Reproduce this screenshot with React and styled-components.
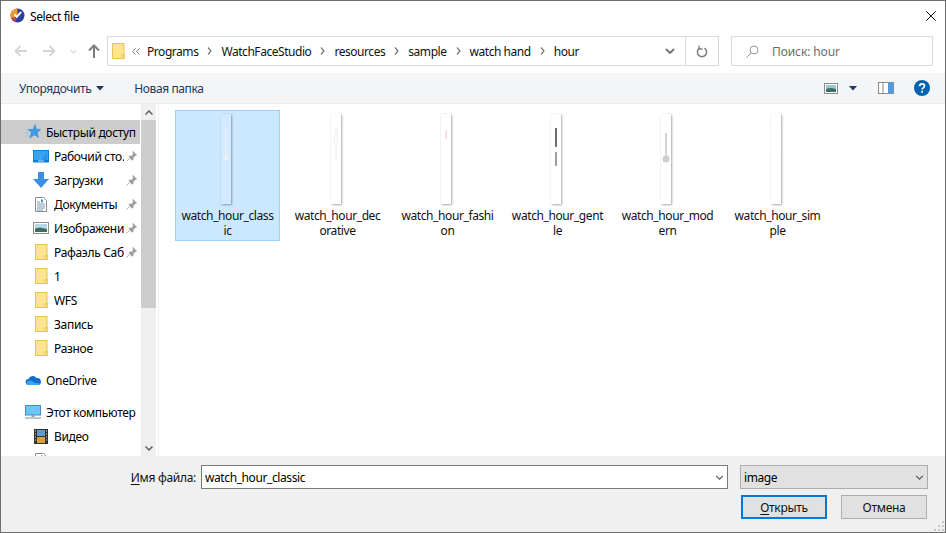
import React from "react";
import styled, { createGlobalStyle } from "styled-components";

const Global = createGlobalStyle`
  html, body { margin: 0; padding: 0; background: #fff; }
  #root { width: 946px; height: 533px; }
  * { box-sizing: border-box; }
`;

const Win = styled.div`
  width: 946px; height: 533px; border: 1px solid #6e6e6e; background: #fff;
  display: flex; flex-direction: column; overflow: hidden;
  font-family: "Noto Sans", "Open Sans", sans-serif; font-size: 12px; color: #000;
  letter-spacing: -.4px;
`;
const TitleBar = styled.div`
  height: 29px; flex: none; display: flex; align-items: center; padding: 0 9px 0 9px; gap: 5px;
`;
const Title = styled.span`flex: 1; padding-top: 1px;`;
const NavRow = styled.div`
  height: 43px; flex: none; display: flex; align-items: flex-start; padding: 6px 12px 0 10px;
`;
const NavButtons = styled.div`
  width: 96px; height: 30px; display: flex; align-items: center; flex: none;
`;
const NavBtn = styled.span`
  width: ${p => p.$w}px; display: flex; justify-content: center; flex: none;
`;
const FlipSvg = styled.svg`
  transform: ${p => p.$flip ? "scaleX(-1)" : "none"};
`;
const UpChevron = styled.svg`
  transform: ${p => p.$up ? "scaleY(-1)" : "none"};
`;
const Address = styled.div`
  width: 612px; height: 30px; flex: none; border: 1px solid #d9d9d9; display: flex; align-items: center; padding-left: 4px;
`;
const Crumbs = styled.div`
  flex: 1; display: flex; align-items: center; white-space: nowrap; min-width: 0; letter-spacing: -.45px;
`;
const Crumb = styled.span`color: #111;`;
const Sep = styled.span`width: ${p => p.$w || 23}px; display: flex; justify-content: center; flex: none;`;
const AddrBtn = styled.span`
  width: ${p => p.$w}px; height: 28px; flex: none; display: flex; align-items: center; justify-content: center;
  border-left: ${p => p.$line ? "1px solid #d9d9d9" : "none"};
`;
const Search = styled.div`
  width: 202px; height: 30px; flex: none; margin-left: 12px; border: 1px solid #d9d9d9; display: flex; align-items: center;
  padding-left: 14px; gap: 13px; color: #6d6d6d; letter-spacing: -.1px;
`;
const Toolbar = styled.div`
  height: 31px; flex: none; background: #f4f5f7; border-bottom: 1px solid #ececec; display: flex; align-items: center;
  padding: 0 15px 0 18px; color: #1e395b;
`;
const ToolItem = styled.span`display: flex; align-items: center; gap: 5px; margin-right: ${p => p.$mr || 0}px;`;
const Spacer = styled.span`flex: 1;`;
const Body = styled.div`flex: 1; display: flex; min-height: 0;`;
const Sidebar = styled.div`
  width: 139px; flex: none; padding-top: 16px; overflow: hidden;
`;
const NavRowItem = styled.div`
  height: 24px; display: flex; align-items: center; padding-left: ${p => p.$top ? 24 : 32}px;
  gap: 5px; white-space: nowrap; margin-top: ${p => p.$mt || 0}px;
  background: ${p => p.$active ? "#cdcdcd" : "transparent"}; letter-spacing: -.32px;
`;
const NavIcon = styled.span`width: 16px; height: 16px; flex: none; display: flex; align-items: center; justify-content: center;`;
const NavLabel = styled.span`
  width: ${p => p.$top ? "auto" : "70px"}; overflow: hidden; flex: none;
`;
const Pin = styled.span`display: flex; margin-left: -3px;`;
const Scroll = styled.div`
  width: 15px; flex: none; background: #f0f0f0; display: flex; flex-direction: column; margin-left: 1px;
`;
const ScrollBtn = styled.div`height: 16px; flex: none; display: flex; align-items: center; justify-content: center;`;
const Thumb = styled.div`height: 188px; flex: none; background: #cdcdcd;`;
const ScrollRest = styled.div`flex: 1;`;
const Divider = styled.div`width: 1px; margin-left: 2px; flex: none; background: #f0f0f0;`;
const Files = styled.div`
  flex: 1; display: flex; gap: 5px; padding: 6px 0 0 16px; align-items: flex-start;
`;
const FileItem = styled.div`
  width: 105px; height: 131px; flex: none; display: flex; flex-direction: column; align-items: center;
  padding-top: 3px; border: 1px solid ${p => p.$sel ? "#99d1ff" : "transparent"};
  background: ${p => p.$sel ? "#cce8ff" : "transparent"};
`;
const ThumbBox = styled.div`
  width: 10px; height: 90px; flex: none; margin-right: 3px; display: flex;
  background: ${p => p.$sel ? "rgba(255,255,255,.12)" : "#fff"};
  box-shadow: 1px 1px 2px rgba(0,0,0,.32), 0 0 1px rgba(0,0,0,.14);
`;
const FileLabel = styled.div`
  margin-top: 4px; line-height: 15px; text-align: center; white-space: nowrap; color: #111;
`;
const Footer = styled.div`
  height: 76px; flex: none; background: #f0f0f0; padding: 9px 0 0 0; display: flex; flex-direction: column; gap: 6px; position: relative;
`;
const FRow = styled.div`
  display: flex; justify-content: flex-end; align-items: center; padding-right: ${p => p.$pr}px;
`;
const FLabel = styled.span`margin-right: 5px; letter-spacing: -.3px; color: #111;`;
const Under = styled.span`text-decoration: underline; text-underline-offset: 2px;`;
const FInput = styled.div`
  width: 527px; height: 24px; border: 1px solid #7a7a7a; background: #fff; display: flex; align-items: center;
  justify-content: space-between; padding: 0 3px; margin-right: 12px;
`;
const FSelect = styled.div`
  width: 188px; height: 24px; border: 1px solid #adadad; background: #e1e1e1; display: flex; align-items: center;
  justify-content: space-between; padding: 0 3px;
`;
const Btn = styled.div`
  width: 86px; height: 24px; margin-left: ${p => p.$ml || 0}px;
  border: ${p => p.$primary ? "2px solid #0078d7" : "1px solid #adadad"}; background: #e1e1e1;
  display: flex; align-items: center; justify-content: center; letter-spacing: -.3px; color: #111;
`;
const Grip = styled.svg`position: absolute; right: 1px; bottom: 1px;`;

const Chevron = ({ c = "#777", w = 10, h = 6, sw = 1.5 }) => (
  <svg width={w} height={h} viewBox="0 0 10 6"><path d="M1 1l4 4 4-4" fill="none" stroke={c} strokeWidth={sw} /></svg>
);
const Caret = ({ c = "#1e395b" }) => (
  <svg width="8" height="5" viewBox="0 0 8 5"><path d="M0 0h8L4 4.500z" fill={c} /></svg>
);
const ArrowLeft = ({ flip, c = "#d4d4d4" }) => (
  <FlipSvg $flip={flip} width="14" height="12" viewBox="0 0 14 12">
    <path d="M13 6H2M6.500 1L1.500 6l5 5" fill="none" stroke={c} strokeWidth="1.800" />
  </FlipSvg>
);
const ArrowUp = () => (
  <svg width="12" height="14" viewBox="0 0 12 14"><path d="M6 14V2M1 6.500L6 1.500l5 5" fill="none" stroke="#7d7d7d" strokeWidth="2" /></svg>
);
const Folder = () => (
  <svg width="13" height="16" viewBox="0 0 13 16">
    <path d="M.5.500h11.500v15H.5z" fill="#fde58d" stroke="#e6c34f" />
    <path d="M10 15.500v-4h2.500v4z" fill="#fbdc74" stroke="#e6c34f" strokeWidth=".8" />
  </svg>
);
const PinIcon = () => (
  <svg width="11" height="11" viewBox="0 0 11 11"><path d="M7 .5l3.500 3.500-1.200.6-2 2-.3 2-1 .6-3-3 .6-1 2-.3 2-2zM3 8l-2.500 2.500" fill="#a3a3a3" stroke="#8f8f8f" strokeWidth=".7" /></svg>
);
const AppIcon = () => (
  <svg width="15" height="15" viewBox="0 0 15 15">
    <circle cx="7.500" cy="7.500" r="7" fill="#2f3f9f" />
    <path d="M7.500.5a7 7 0 0 0-6.600 9.600l6.600-1z" fill="#f29a2e" />
    <path d="M.9 10.100A7 7 0 0 0 5 14l2-4z" fill="#c8443c" />
    <path d="M4.500 6.400l2.300 2.400 4.400-5" fill="none" stroke="#fff" strokeWidth="2" />
  </svg>
);
const Star = () => (
  <svg width="16" height="16" viewBox="0 0 16 16">
    <path d="M10 .5l1.300 4.700 4.500.3-3.700 3 1.400 5-4.200-2.700-4.500 3.200 1.700-5.500L3 5.500h5z" fill="#3d9cea" stroke="#1f7fd0" strokeWidth=".5" />
    <path d="M1 6h3M0 9h4M1 12h3" stroke="#8cc4f0" strokeWidth="1" />
  </svg>
);
const Desktop = () => (
  <svg width="16" height="13" viewBox="0 0 16 13"><rect width="16" height="12.500" fill="#0a7fd8" /><rect x="1" y="1" width="14" height="9" fill="#36a3ee" /><path d="M9 10l5-8v8z" fill="#2a92e6" /><path d="M5 11h6" stroke="#bfe0f7" /></svg>
);
const Download = () => (
  <svg width="16" height="16" viewBox="0 0 16 16"><path d="M5 0h6v7h5l-8 9-8-9h5z" fill="#3b8fe0" /></svg>
);
const Doc = () => (
  <svg width="12" height="15" viewBox="0 0 12 15"><path d="M.5.500h8l3 3v11H.5z" fill="#fff" stroke="#8a8a8a" /><path d="M2 5h3M2 7h8M2 9h8M2 11h8M2 13h6" stroke="#6d8db0" strokeWidth=".9" /><path d="M6 2.500h2v3H6z" fill="#4a9be0" /></svg>
);
const Pics = () => (
  <svg width="16" height="12" viewBox="0 0 16 12"><rect x=".5" y=".5" width="15" height="11" fill="#fff" stroke="#8d8d8d" /><rect x="2" y="2" width="12" height="8" fill="#b7d6ea" /><path d="M2 7c3-2 6-1 12 0v3H2z" fill="#3f6f5c" /></svg>
);
const Cloud = () => (
  <svg width="16" height="10" viewBox="0 0 16 10"><path d="M4 10a3 3 0 0 1-.6-6A4.600 4.600 0 0 1 11.600 3 3.500 3.500 0 0 1 13 10z" fill="#0f6fc9" /><path d="M3 10a2.400 2.400 0 0 1 0-4.200C6 5 8 7 10 7.800l5 .4A2.600 2.600 0 0 1 13 10z" fill="#38a4ec" /></svg>
);
const Monitor = () => (
  <svg width="16" height="14" viewBox="0 0 16 14"><rect x=".5" y=".5" width="15" height="9.500" fill="#6fc3f5" stroke="#3f8fc9" /><rect x="6.500" y="10" width="3" height="2" fill="#8aa3b5" /><rect x="0" y="12.300" width="16" height="1.500" fill="#a7b6c2" /></svg>
);
const Film = () => (
  <svg width="14" height="15" viewBox="0 0 14 15"><rect width="14" height="15" fill="#33302e" /><rect x="3" y="1" width="8" height="6" fill="#5c9ad1" /><rect x="3" y="8" width="8" height="6" fill="#d4a13d" /><path d="M1 2h1M1 5h1M1 8h1M1 11h1M12 2h1M12 5h1M12 8h1M12 11h1" stroke="#ddd" /></svg>
);

const navRows = [
  { icon: <Desktop />, label: "Рабочий сто.", pin: true },
  { icon: <Download />, label: "Загрузки", pin: true },
  { icon: <Doc />, label: "Документы", pin: true },
  { icon: <Pics />, label: "Изображени", pin: true },
  { icon: <Folder />, label: "Рафаэль Саб", pin: true },
  { icon: <Folder />, label: "1" },
  { icon: <Folder />, label: "WFS" },
  { icon: <Folder />, label: "Запись" },
  { icon: <Folder />, label: "Разное" },
];

const hands = {
  classic: <><path d="M5 13v30" stroke="#e8eef4" strokeWidth="1.500" /><ellipse cx="5" cy="43.500" rx="3" ry="3.500" fill="#e8eef4" /></>,
  decorative: <path d="M5 15c-2 8-2 12 0 16 2-4 2-8 0-16zM5 31v15" fill="none" stroke="#ececec" strokeWidth="1" />,
  fashion: <path d="M5 16v9" stroke="#fbc8dc" strokeWidth="1.200" />,
  gentle: <><path d="M5 14v19" stroke="#6f6f6f" strokeWidth="2" /><path d="M5 38v14" stroke="#a0a0a0" strokeWidth="2" /></>,
  modern: <><path d="M5 19v26" stroke="#d4d4d4" strokeWidth="2" /><circle cx="5" cy="45" r="3.600" fill="#cfcfcf" /></>,
  simple: <path d="M5 13v25" stroke="#f8f8f8" strokeWidth="1" />,
};
const files = [
  { key: "classic", a: "watch_hour_class", b: "ic", sel: true },
  { key: "decorative", a: "watch_hour_dec", b: "orative" },
  { key: "fashion", a: "watch_hour_fashi", b: "on" },
  { key: "gentle", a: "watch_hour_gent", b: "le" },
  { key: "modern", a: "watch_hour_mod", b: "ern" },
  { key: "simple", a: "watch_hour_sim", b: "ple" },
];
const crumbs = ["Programs", "WatchFaceStudio", "resources", "sample", "watch hand", "hour"];

export default function App() {
  return (
    <>
      <Global />
      <Win>
        <TitleBar>
          <AppIcon />
          <Title>Select file</Title>
          <svg width="10" height="10" viewBox="0 0 10 10"><path d="M.3.300l9.400 9.400M9.700.300L.3 9.700" stroke="#111" strokeWidth="1" /></svg>
        </TitleBar>
        <NavRow>
          <NavButtons>
            <NavBtn $w={20}><ArrowLeft /></NavBtn>
            <NavBtn $w={36}><ArrowLeft flip /></NavBtn>
            <NavBtn $w={13}><Chevron c="#d4d4d4" w={7} h={5} /></NavBtn>
            <NavBtn $w={27}><ArrowUp /></NavBtn>
          </NavButtons>
          <Address>
            <Crumbs>
              <Folder />
              <Sep $w={22}><svg width="8" height="7" viewBox="0 0 8 7"><path d="M3.500.5l-3 3 3 3M7.500.5l-3 3 3 3" fill="none" stroke="#777" /></svg></Sep>
              {crumbs.map((c, i) => (
                <React.Fragment key={c}>
                  {i > 0 && <Sep><svg width="5" height="8" viewBox="0 0 5 8"><path d="M1 .5l3 3.500-3 3.500" fill="none" stroke="#777" strokeWidth="1.200" /></svg></Sep>}
                  <Crumb>{c}</Crumb>
                </React.Fragment>
              ))}
            </Crumbs>
            <AddrBtn $w={31}><Chevron sw={2} /></AddrBtn>
            <AddrBtn $w={33} $line><svg width="12" height="13" viewBox="0 0 12 13"><path d="M8.500 3.200A4.600 4.600 0 1 1 3.500 3.200" fill="none" stroke="#7d7d7d" strokeWidth="1.500" /><path d="M3 .5v3.500h3.500" fill="none" stroke="#7d7d7d" strokeWidth="1.300" /></svg></AddrBtn>
          </Address>
          <Search>
            <svg width="13" height="13" viewBox="0 0 13 13"><circle cx="8" cy="5" r="4" fill="none" stroke="#9a9a9a" /><path d="M5 8l-4.500 4.500" stroke="#b07f8f" /></svg>
            <span>Поиск: hour</span>
          </Search>
        </NavRow>
        <Toolbar>
          <ToolItem $mr={30}>Упорядочить <Caret /></ToolItem>
          <ToolItem>Новая папка</ToolItem>
          <Spacer />
          <ToolItem $mr={11}>
            <svg width="14" height="11" viewBox="0 0 14 11"><rect x=".5" y=".5" width="13" height="10" fill="#fff" stroke="#8a8a8a" /><rect x="2" y="2" width="10" height="7" fill="#9cc6e0" /><path d="M2 6c3-1.500 6-1 10 0v3H2z" fill="#3f6f5c" /></svg>
          </ToolItem>
          <ToolItem $mr={21}><Caret /></ToolItem>
          <ToolItem $mr={20}>
            <svg width="16" height="12" viewBox="0 0 16 12"><rect x=".5" y=".5" width="15" height="11" fill="#fff" stroke="#8a8a8a" /><rect x="10" y="1" width="5" height="10" fill="#4a9be8" /><path d="M5 1v10" stroke="#8a8a8a" /></svg>
          </ToolItem>
          <svg width="16" height="16" viewBox="0 0 16 16"><circle cx="8" cy="8" r="8" fill="#0063b1" /><path d="M5.600 6.200c0-1.600 1.100-2.400 2.500-2.400s2.400.8 2.400 2.100c0 1.900-2.400 1.900-2.400 3.600" fill="none" stroke="#fff" strokeWidth="1.700" /><rect x="7.200" y="10.800" width="1.800" height="1.900" fill="#fff" /></svg>
        </Toolbar>
        <Body>
          <Sidebar>
            <NavRowItem $top $active><NavIcon><Star /></NavIcon><NavLabel $top>Быстрый доступ</NavLabel></NavRowItem>
            {navRows.map(r => (
              <NavRowItem key={r.label}>
                <NavIcon>{r.icon}</NavIcon>
                <NavLabel>{r.label}</NavLabel>
                {r.pin && <Pin><PinIcon /></Pin>}
              </NavRowItem>
            ))}
            <NavRowItem $top $mt={8}><NavIcon><Cloud /></NavIcon><NavLabel $top>OneDrive</NavLabel></NavRowItem>
            <NavRowItem $top $mt={8}><NavIcon><Monitor /></NavIcon><NavLabel $top>Этот компьютер</NavLabel></NavRowItem>
            <NavRowItem><NavIcon><Film /></NavIcon><NavLabel>Видео</NavLabel></NavRowItem>
            <NavRowItem><NavIcon><Doc /></NavIcon><NavLabel>Документы</NavLabel></NavRowItem>
          </Sidebar>
          <Scroll>
            <ScrollBtn><UpChevron $up width="8" height="5" viewBox="0 0 8 5"><path d="M.5.500L4 4 7.500.5" fill="none" stroke="#606060" strokeWidth="1.500" /></UpChevron></ScrollBtn>
            <Thumb />
            <ScrollRest />
            <ScrollBtn><UpChevron width="8" height="5" viewBox="0 0 8 5"><path d="M.5.500L4 4 7.500.5" fill="none" stroke="#606060" strokeWidth="1.500" /></UpChevron></ScrollBtn>
          </Scroll>
          <Divider />
          <Files>
            {files.map(f => (
              <FileItem key={f.key} $sel={f.sel}>
                <ThumbBox $sel={f.sel}>
                  <svg width="10" height="90" viewBox="0 0 10 90">{hands[f.key]}</svg>
                </ThumbBox>
                <FileLabel>{f.a}<br />{f.b}</FileLabel>
              </FileItem>
            ))}
          </Files>
        </Body>
        <Footer>
          <FRow $pr={17}>
            <FLabel><Under>И</Under>мя файла:</FLabel>
            <FInput><span>watch_hour_classic</span><Chevron c="#555" w={9} h={5} sw={1.300} /></FInput>
            <FSelect><span>image</span><Chevron c="#555" w={9} h={5} sw={1.300} /></FSelect>
          </FRow>
          <FRow $pr={18}>
            <Btn $primary><span><Under>О</Under>ткрыть</span></Btn>
            <Btn $ml={14}>Отмена</Btn>
          </FRow>
          <Grip width="11" height="11" viewBox="0 0 11 11"><path d="M9 1h2v2H9zM5 5h2v2H5zM9 5h2v2H9zM1 9h2v2H1zM5 9h2v2H5zM9 9h2v2H9z" fill="#c6c6c6" /></Grip>
        </Footer>
      </Win>
    </>
  );
}
